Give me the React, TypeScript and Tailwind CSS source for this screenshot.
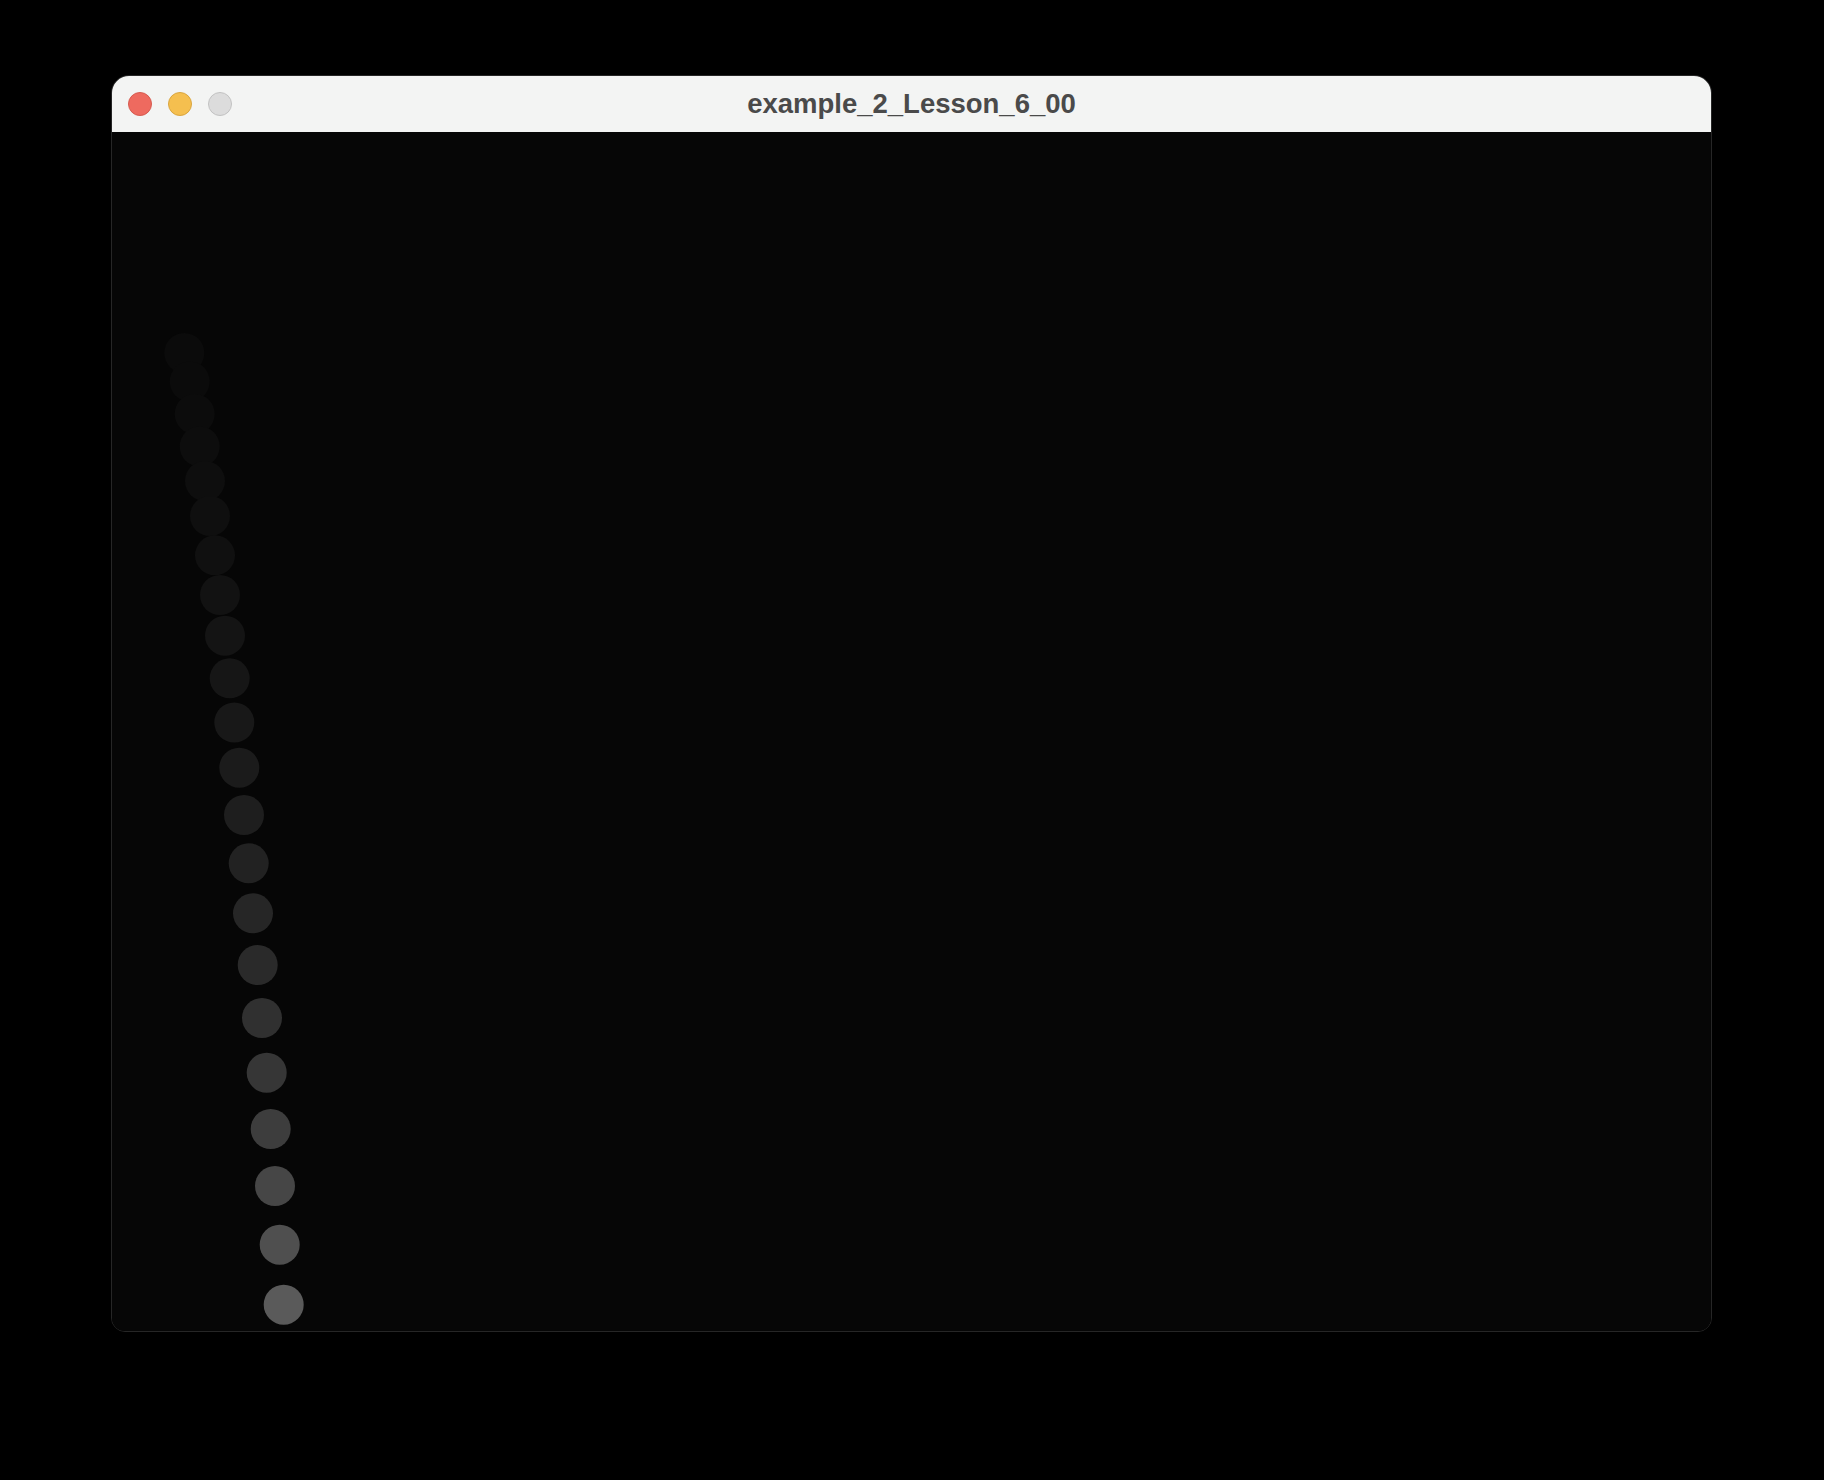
import React from "react";

const trail: [number, number][] = [
  [184.3, 353], [189.7, 381.5], [194.7, 414], [199.7, 446.5], [205, 481], [210, 516],
  [215, 555.3], [220, 595], [225, 635.7], [229.7, 678.3], [234.3, 722.5], [239.3, 767.7],
  [244, 815], [248.7, 863.3], [253, 913.3], [257.7, 965], [262, 1018], [266.7, 1072.7],
  [270.7, 1129], [275, 1186], [279.7, 1244.7], [283.7, 1304.7],
];

function shade(i: number) {
  const back = trail.length - 1 - i;
  const v = Math.round(6 + 84 * Math.pow(0.87, back));
  return `rgb(${v},${v},${v})`;
}

function TrafficLights() {
  return (
    <div className="flex items-center gap-4">
      <div className="w-6 h-6 rounded-full bg-[#ee6a5f] border border-[#d65b50]" />
      <div className="w-6 h-6 rounded-full bg-[#f5bf4f] border border-[#d9a53f]" />
      <div className="w-6 h-6 rounded-full bg-[#dcdcdc] border border-[#c2c2c2]" />
    </div>
  );
}

export default function App() {
  return (
    <div className="min-h-[1480px] bg-black pt-[75px] pl-[111px]">
      <div className="w-[1601px] h-[1257px] flex flex-col rounded-t-[18px] rounded-b-[14px] overflow-hidden border border-[#262626]">
        <div className="relative h-[56px] shrink-0 bg-[#f3f4f3] flex items-center px-[16px]">
          <TrafficLights />
          <div
            className="absolute inset-0 flex items-center justify-center text-[27.5px] font-bold text-[#4a4a4a]"
            style={{ fontFamily: '"Liberation Sans", Arial, sans-serif' }}
          >
            example_2_Lesson_6_00
          </div>
        </div>
        <div className="flex-1 bg-[#060606]">
          <svg width="1600" height="1200" viewBox="112 132 1600 1200" className="block">
            {trail.map(([x, y], i) => (
              <circle key={i} cx={x} cy={y} r={20} fill={shade(i)} />
            ))}
          </svg>
        </div>
      </div>
    </div>
  );
}
